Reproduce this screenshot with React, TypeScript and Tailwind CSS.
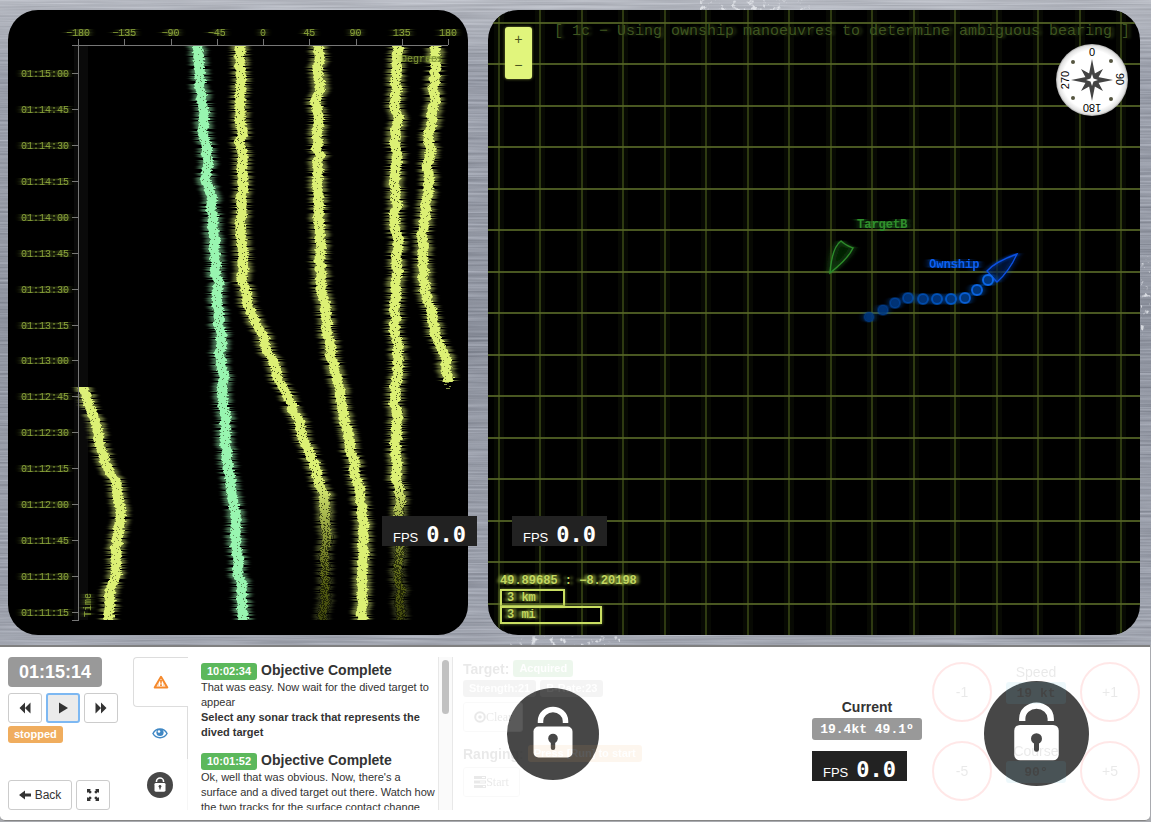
import React from 'react';

type Point = [number, number];

function makeRandom(seed: number) {
  let s = seed;
  return () => {
    s = (s + 0x6d2b79f5) | 0;
    let t = Math.imul(s ^ (s >>> 15), 1 | s);
    t = (t + Math.imul(t ^ (t >>> 7), 61 | t)) ^ t;
    return ((t ^ (t >>> 14)) >>> 0) / 4294967296;
  };
}

function interpolate(points: Point[], y: number) {
  for (let i = 1; i < points.length; i++) {
    const [x0, y0] = points[i - 1];
    const [x1, y1] = points[i];
    if (y <= y1) return x0 + ((x1 - x0) * (y - y0)) / (y1 - y0);
  }
  return points[points.length - 1][0];
}

interface Track {
  color: string;
  points: Point[];
  fadeFrom?: number;
}

const YELLOW = '#dcf074';

// Bearing tracks, in the plot's own coordinates.
const tracks: Track[] = [
  { color: '#98f5b0', points: [[189, 36], [191, 60], [196, 110], [200, 150], [204, 200], [209, 280], [215, 370], [218, 420], [223, 465], [227, 505], [230, 550], [233, 590], [235, 610]] },
  { color: YELLOW, fadeFrom: 484, points: [[232, 36], [233, 120], [234, 270], [239, 292], [254, 325], [277, 380], [297, 430], [314, 480], [318, 500], [317, 520], [317, 610]] },
  { color: YELLOW, points: [[311, 36], [310, 240], [314, 290], [327, 360], [338, 420], [350, 470], [354, 500], [354, 610]] },
  { color: YELLOW, fadeFrom: 470, points: [[389, 36], [388, 200], [388, 450], [391, 490], [391, 610]] },
  { color: YELLOW, points: [[428, 36], [427, 65], [423, 120], [420, 170], [414, 230], [415, 270], [424, 310], [435, 340], [439, 365], [440, 372]] },
  { color: YELLOW, points: [[76, 377], [84, 402], [91, 430], [99, 457], [109, 478], [114, 500], [109, 535], [106, 570], [101, 590], [100, 610]] },
];

function buildTrack(track: Track, seed: number) {
  const rnd = makeRandom(seed);
  const top = track.points[0][1];
  const bottom = track.points[track.points.length - 1][1];
  let core = '';
  let glow = '';
  let specks = '';
  let wobble = 0;
  for (let y = top; y < bottom; y++) {
    wobble = wobble * 0.88 + (rnd() - 0.5) * 1.9;
    const cx = interpolate(track.points, y) + wobble;
    const fading = track.fadeFrom ? Math.min(1, Math.max(0, (y - track.fadeFrom) / 70)) : 0;
    const half = 4.6 - fading * 1.2;
    const x0 = (cx - half - rnd()).toFixed(1);
    const w = (half * 2 + rnd() * 2).toFixed(1);
    core += `M${x0} ${y}h${w}v1h-${w}z`;
    if (rnd() > 0.2) glow += `M${(cx - half - 3 - rnd() * 2).toFixed(1)} ${y}h${(half * 2 + 8).toFixed(1)}v1h-${(half * 2 + 8).toFixed(1)}z`;
    const count = 1 + Math.round(fading * 6);
    for (let i = 0; i < count; i++) {
      if (rnd() > 0.4 - fading * 0.4) specks += `M${(cx + (rnd() - 0.5) * 12).toFixed(0)} ${y}h1v1h-1z`;
    }
  }
  return { core, glow, specks };
}

const trackShapes = tracks.map((t, i) => ({ ...t, ...buildTrack(t, i * 97 + 11) }));

const bearings = ['−180', '−135', '−90', '−45', '0', '45', '90', '135', '180'];
const times = [
  '01:15:00', '01:14:45', '01:14:30', '01:14:15', '01:14:00', '01:13:45', '01:13:30', '01:13:15',
  '01:13:00', '01:12:45', '01:12:30', '01:12:15', '01:12:00', '01:11:45', '01:11:30', '01:11:15',
];

function BrushedMetal() {
  return (
    <svg className="absolute inset-0 h-full w-full" aria-hidden="true">
      <defs>
        <filter id="brushed" x="0" y="0" width="100%" height="100%" colorInterpolationFilters="sRGB">
          <feTurbulence type="fractalNoise" baseFrequency="0.008 0.45" numOctaves="3" seed="4" />
          <feColorMatrix values="0.26 0.08 0 0 0.42  0.26 0.08 0 0 0.438  0.26 0.08 0 0 0.485  0 0 0 0 1" />
        </filter>
        <filter id="scratch" x="-20%" y="-20%" width="140%" height="140%">
          <feTurbulence type="fractalNoise" baseFrequency="0.16" numOctaves="3" seed="8" result="n" />
          <feColorMatrix in="n" values="0 0 0 0 0.9  0 0 0 0 0.92  0 0 0 0 0.95  6 0 0 0 -3.5" result="s" />
          <feComposite in="s" in2="SourceGraphic" operator="in" />
        </filter>
        <linearGradient id="shine" x1="0" y1="0" x2="0" y2="1">
          <stop offset="0" stopColor="#fff" stopOpacity="0.3" />
          <stop offset="0.12" stopColor="#fff" stopOpacity="0.02" />
          <stop offset="0.5" stopColor="#39404c" stopOpacity="0.1" />
          <stop offset="0.9" stopColor="#fff" stopOpacity="0.02" />
          <stop offset="1" stopColor="#fff" stopOpacity="0.12" />
        </linearGradient>
      </defs>
      <rect width="100%" height="100%" filter="url(#brushed)" />
      <rect width="100%" height="100%" fill="url(#shine)" />
      <g filter="url(#scratch)" fill="#fff" fillOpacity="0.7">
        <rect x="700" y="0" width="110" height="10" />
        <rect x="1141" y="255" width="9" height="80" />
        <rect x="510" y="636" width="110" height="9" />
      </g>
    </svg>
  );
}

function SonarPlot() {
  return (
    <svg viewBox="0 0 460 625" className="block h-auto w-full rounded-[30px] bg-black" role="img" aria-label="Sonar bearing plot">
      <defs>
        <filter id="smear" x="-30%" y="-2%" width="160%" height="104%">
          <feGaussianBlur stdDeviation="2 0.4" />
        </filter>
        <filter id="textSmear" x="-20%" y="-10%" width="140%" height="120%">
          <feGaussianBlur in="SourceGraphic" stdDeviation="3 0.3" result="b" />
          <feMerge>
            <feMergeNode in="b" />
            <feMergeNode in="SourceGraphic" />
          </feMerge>
        </filter>
        <linearGradient id="decay" gradientUnits="userSpaceOnUse" x1="0" y1="470" x2="0" y2="610">
          <stop offset="0" stopColor="#fff" />
          <stop offset="0.45" stopColor="#aaa" />
          <stop offset="1" stopColor="#666" />
        </linearGradient>
        <mask id="decayMask" maskUnits="userSpaceOnUse" x="0" y="0" width="460" height="625">
          <rect width="460" height="625" fill="url(#decay)" />
        </mask>
        <linearGradient id="decayFill" gradientUnits="userSpaceOnUse" x1="0" y1="480" x2="0" y2="580">
          <stop offset="0" stopColor="#dcf074" />
          <stop offset="1" stopColor="#9fb020" />
        </linearGradient>
      </defs>

      {trackShapes.map((t, i) => (
        <g key={i} mask={t.fadeFrom ? 'url(#decayMask)' : undefined}>
          <path d={t.glow} fill={t.color} opacity="0.5" filter="url(#smear)" />
          <path d={t.core} fill={t.fadeFrom ? 'url(#decayFill)' : t.color} />
          <path d={t.specks} fill="#1d2408" opacity={t.fadeFrom ? 0.7 : 0.5} />
        </g>
      ))}
      <path d="M437 372h4v1h-4zM436 374h3v1h-3zM441 376h2v1h-2zM438 378h4v1h-4z" fill={YELLOW} opacity="0.6" />

      <rect x="66" y="36" width="14" height="574" fill="#fff" opacity="0.04" />
      <g stroke="#777" strokeWidth="1">
        <path d="M64 35.5H440M70.5 36V610M64 610.5H71" />
        {bearings.map((b, i) => (
          <path key={b} d={`M${70.5 + Math.round(i * 46.25)} 29v6`} />
        ))}
        {times.map((t, i) => (
          <path key={t} d={`M64 ${63.5 + Math.round(i * 35.93)}h6`} />
        ))}
      </g>
      <g fill="#87a038" fontFamily="'Liberation Mono', monospace" fontSize="10" filter="url(#textSmear)">
        {bearings.map((b, i) => (
          <text key={b} x={70 + i * 46.25} y="26" textAnchor="middle">{b}</text>
        ))}
        {times.map((t, i) => (
          <text key={t} x="13" y={67 + Math.round(i * 35.93)}>{t}</text>
        ))}
        <text x="393" y="52" fill="#7d9434">Degrees</text>
        <text transform="translate(83 607) rotate(-90)">Time</text>
      </g>
    </svg>
  );
}

const trail: Point[] = [[381, 307], [395, 300], [407, 293], [420, 288], [435, 289], [449, 289], [463, 289], [477, 288], [489, 280], [500, 270]];
const gridSteps = Array.from({ length: 50 }, (_, i) => Math.floor(i * 41.53));

function MapGrid() {
  return (
    <svg viewBox="0 0 652 625" preserveAspectRatio="xMinYMin slice" className="absolute inset-0 h-full w-full" aria-hidden="true">
      <defs>
        <filter id="haze" x="-30%" y="-30%" width="160%" height="160%">
          <feGaussianBlur in="SourceGraphic" stdDeviation="3 0.6" result="b" />
          <feMerge>
            <feMergeNode in="b" />
            <feMergeNode in="SourceGraphic" />
          </feMerge>
        </filter>
      </defs>
      {gridSteps.map((s) => (
        <rect key={s} x={6 + s} y="0" width="10" height="2100" fill="#070903" />
      ))}
      {gridSteps.map((s) => (
        <rect key={s} x={10 + s} y="0" width="2" height="2100" fill="#2e3a11" />
      ))}
      {gridSteps.map((s) => (
        <rect key={s} x="0" y={12 + s} width="2100" height="2" fill="#566627" fillOpacity="0.85" />
      ))}
      <g filter="url(#haze)" fontFamily="'Liberation Mono', monospace" fontSize="12" fontWeight="700">
        <path d="M342 263C343 250 346 236 353 231C357 235 360 236 365 238C361 247 352 255 342 263z" fill="#0b2a0b" fillOpacity="0.5" stroke="#2d8c2a" strokeWidth="1.4" />
        <text x="369" y="218" fill="#2f8f2c">TargetB</text>
        <path d="M529 244C518 248 505 254 499 261L509 272C517 265 524 255 529 244z" fill="#001b4a" fillOpacity="0.4" stroke="#0a4fe0" strokeWidth="1.4" />
        <text x="441" y="258" fill="#0a5df0">Ownship</text>
        {trail.map(([x, y], i) => (
          <circle key={i} cx={x} cy={y} r="5" fill="#04377f" stroke="#0a6bf0" strokeOpacity={0.1 + i * 0.09} strokeWidth="2" fillOpacity={0.75} />
        ))}
      </g>
    </svg>
  );
}

function Compass() {
  return (
    <svg viewBox="0 0 74 74" className="absolute top-[33px] right-[11px] h-[74px] w-[74px]" role="img" aria-label="Compass">
      <defs>
        <radialGradient id="dial">
          <stop offset="0.82" stopColor="#fff" />
          <stop offset="0.95" stopColor="#e2e2e2" />
          <stop offset="1" stopColor="#a8a8a8" />
        </radialGradient>
      </defs>
      <circle cx="37" cy="37" r="36" fill="url(#dial)" />
      <g fill="#444">
        <path d="M26 26L37 32L48 26L42 37L48 48L37 42L26 48L32 37z" />
        <path d="M37 16L40.500 33.500L58 37L40.500 40.500L37 58L33.500 40.500L16 37L33.500 33.500z" />
      </g>
      <path d="M37 31L38.500 35.500L43 37L38.500 38.500L37 43L35.500 38.500L31 37L35.500 35.500z" fill="#fff" />
      <g fill="#555540">
        <circle cx="18" cy="19" r="2" />
        <circle cx="56" cy="18" r="2" />
        <circle cx="18" cy="55" r="2" />
        <circle cx="56" cy="56" r="2" />
      </g>
      <g fill="#000" fontFamily="'Liberation Sans', sans-serif" fontSize="11" textAnchor="middle">
        <text x="37" y="13">0</text>
        <text transform="translate(61 36) rotate(90)">90</text>
        <text transform="translate(37 61) rotate(180)">180</text>
        <text transform="translate(14 37) rotate(-90)">270</text>
      </g>
    </svg>
  );
}

function Fps({ className = '' }: { className?: string }) {
  return (
    <div className={`flex h-[30px] w-[95px] items-baseline gap-2 bg-[#222] pl-[11px] text-white ${className}`}>
      <span className="text-[13px] leading-[38px]">FPS</span>
      <span className="font-['DejaVu_Sans_Mono',monospace] text-[22px] leading-[38px] font-bold">0.0</span>
    </div>
  );
}

function LockGlyph({ className }: { className: string }) {
  return (
    <svg viewBox="0 0 92 92" className={className} aria-hidden="true">
      <circle cx="46" cy="46" r="46" fill="#474747" />
      <path d="M33.500 35V33a12.500 11.500 0 0 1 25 0v2" fill="none" stroke="#fff" strokeWidth="5.500" />
      <rect x="26.500" y="38.500" width="39" height="31" rx="5" fill="#fff" />
      <circle cx="46" cy="50.500" r="4.800" fill="#474747" />
      <rect x="43.800" y="52" width="4.400" height="10" rx="2" fill="#474747" />
    </svg>
  );
}

const button = 'flex h-[30px] items-center justify-center rounded-[3px] border border-[#ccc] bg-white';
const label = 'flex h-[17px] items-center rounded-[3px] px-1.5 text-[11px] leading-none font-bold text-white';

function Controls() {
  return (
    <section className="flex w-[133px] shrink-0 flex-col items-start pl-2" aria-label="Playback">
      <div className="flex h-[30px] items-center rounded-[4px] bg-[#999] px-[11px] text-[18px] leading-none font-bold text-white">01:15:14</div>
      <div className="mt-1.5 flex gap-1">
        <button type="button" aria-label="Slower" className={`${button} w-[34px]`}>
          <svg viewBox="0 0 12 12" className="h-3 w-3" fill="#333"><path d="M6 0.500V11.500L0.500 6zM11.500 0.500V11.500L6 6z" /></svg>
        </button>
        <button type="button" aria-label="Play" className="flex h-[30px] w-[34px] items-center justify-center rounded-[3px] border-2 border-[#7db8f2] bg-[#ebebeb]">
          <svg viewBox="0 0 12 12" className="h-3 w-3" fill="#333"><path d="M2 0.500V11.500L11 6z" /></svg>
        </button>
        <button type="button" aria-label="Faster" className={`${button} w-[34px]`}>
          <svg viewBox="0 0 12 12" className="h-3 w-3" fill="#333"><path d="M0.500 0.500V11.500L6 6zM6 0.500V11.500L11.500 6z" /></svg>
        </button>
      </div>
      <div className={`${label} mt-[3px] bg-[#f0ad5e]`}>stopped</div>
      <div className="mt-auto flex gap-1">
        <button type="button" className={`${button} w-16 gap-1 text-[12px]`}>
          <svg viewBox="0 0 12 12" className="h-3 w-3" fill="#333"><path d="M0 6L6 1.500V4.500H12V7.500H6V10.500z" /></svg>
          Back
        </button>
        <button type="button" aria-label="Full screen" className={`${button} w-[34px]`}>
          <svg viewBox="0 0 12 12" className="h-3 w-3" fill="#333">
            <path d="M0 0H4L2.900 1.100L4.800 3L3 4.800L1.100 2.900L0 4z" />
            <path d="M12 0H8L9.100 1.100L7.200 3L9 4.800L10.900 2.900L12 4z" />
            <path d="M0 12H4L2.900 10.900L4.800 9L3 7.200L1.100 9.100L0 8z" />
            <path d="M12 12H8L9.100 10.900L7.200 9L9 7.200L10.900 9.100L12 8z" />
          </svg>
        </button>
      </div>
    </section>
  );
}

function Tabs() {
  return (
    <nav className="flex w-[55px] shrink-0 flex-col" aria-label="Panels">
      <button type="button" aria-label="Objectives" className="flex h-[50px] items-center justify-center rounded-l-[4px] border border-r-0 border-[#ddd]">
        <svg viewBox="0 0 16 14" className="h-3.5 w-4">
          <path d="M8 1.800L14.300 12.500H1.700z" fill="#fff" stroke="#f5892c" strokeWidth="2" strokeLinejoin="round" />
          <path d="M7 5h2l-0.400 3.700h-1.200zM7.100 9.300h1.800v1.600H7.100z" fill="#f5892c" />
          <path d="M4 11l2-4v4zM12 11l-2-4v4z" fill="#f5892c" opacity="0.3" />
        </svg>
      </button>
      <button type="button" aria-label="View" className="flex h-[52px] items-center justify-center border-r border-[#ddd]">
        <svg viewBox="0 0 16 12" className="h-3 w-4">
          <path d="M1 6.500C4 0.500 12 0.500 15 6.500C12 12 4 12 1 6.500z" fill="#fff" stroke="#3f87c4" strokeWidth="1.500" />
          <circle cx="8" cy="5.500" r="3.600" fill="#3f87c4" />
          <circle cx="7" cy="4.500" r="1.300" fill="#fff" />
        </svg>
      </button>
      <button type="button" aria-label="Locked" className="flex h-[51px] items-center justify-center border-r border-[#f6f6f6]">
        <LockGlyph className="h-[26px] w-[26px]" />
      </button>
    </nav>
  );
}

function Message({ time, children }: { time: string; children: React.ReactNode }) {
  return (
    <article className="mb-2.5 text-[11px] leading-[15px]">
      <header className="flex h-5 items-end gap-1">
        <span className={`${label} bg-[#5cb85c]`}>{time}</span>
        <h2 className="text-[14px] leading-5 font-bold">Objective Complete</h2>
      </header>
      {children}
    </article>
  );
}

function Messages() {
  return (
    <section className="flex h-[153px] w-[265px] shrink-0 overflow-hidden pl-[13px]" aria-label="Messages">
      <div className="min-w-0 flex-1 pt-[3px]">
        <Message time="10:02:34">
          <p>That was easy. Now wait for the dived target to appear</p>
          <p className="font-bold">Select any sonar track that represents the dived target</p>
        </Message>
        <Message time="10:01:52">
          <p>Ok, well that was obvious. Now, there's a surface and a dived target out there. Watch how the two tracks for the surface contact change</p>
        </Message>
      </div>
      <div className="w-[15px] border-x border-[#e8e8e8] bg-[#fafafa] px-[3px] pt-[3px]">
        <div className="h-[54px] rounded-full bg-[#c1c1c1]" />
      </div>
    </section>
  );
}

function TargetPanel() {
  return (
    <section className="relative ml-2.5 w-[180px] shrink-0" aria-label="Target">
      <div className="absolute inset-0 flex items-center justify-center">
        <LockGlyph className="h-[92px] w-[92px]" />
      </div>
      <div className="relative pt-[3px] opacity-10">
        <div className="flex h-[17px] items-center gap-1">
          <h2 className="text-[14px] leading-none font-bold">Target:</h2>
          <span className={`${label} bg-[#5cb85c]`}>Acquired</span>
        </div>
        <div className="mt-[3px] flex gap-1">
          <span className={`${label} bg-[#999]`}>Strength:21</span>
          <span className={`${label} bg-[#999]`}>B-Rate:23</span>
        </div>
        <button type="button" disabled className={`${button} mt-[5px] w-[60px] bg-transparent font-['Liberation_Serif',serif] text-[12px]`}>
          <svg viewBox="0 0 12 12" className="h-3 w-3">
            <circle cx="6" cy="6" r="4.800" fill="none" stroke="#333" strokeWidth="2" />
            <circle cx="6" cy="6" r="1.800" fill="#333" />
          </svg>
          Clear
        </button>
        <div className="mt-[13px] flex h-[17px] items-center gap-1">
          <h2 className="text-[14px] leading-none font-bold">Ranging:</h2>
          <span className={`${label} whitespace-nowrap bg-[#f0ad5e]`}>Press [Run] to start</span>
        </div>
        <button type="button" disabled className={`${button} mt-[5px] w-[57px] bg-transparent font-['Liberation_Serif',serif] text-[12px]`}>
          <svg viewBox="0 0 12 12" className="h-3 w-3" fill="#333">
            <path d="M0 0h12v3H0zM0 4.500h12v3H0zM0 9h12v3H0z" />
            <path d="M8 1h3v1H8zM6 5.500h5v1H6zM9 10h2v1H9z" fill="#fff" />
          </svg>
          Start
        </button>
      </div>
    </section>
  );
}

function StepButton({ children }: { children: React.ReactNode }) {
  return (
    <button type="button" disabled className="h-[60px] w-[60px] rounded-full border-2 border-[#ff2020] text-[14px]">{children}</button>
  );
}

function SteerRow({ name, value, down, up }: { name: string; value: string; down: string; up: string }) {
  return (
    <div className="flex h-[60px] justify-between">
      <StepButton>{down}</StepButton>
      <div className="flex w-[60px] flex-col items-center">
        <span className="text-[14px] leading-5">{name}</span>
        <span className="flex h-[22px] w-full items-center justify-center rounded-[3px] bg-[#5bc0de] font-['Liberation_Mono',monospace] text-[13px] leading-none font-bold">{value}</span>
      </div>
      <StepButton>{up}</StepButton>
    </div>
  );
}

function Steering() {
  return (
    <section className="ml-auto flex shrink-0 gap-2.5 pr-2.5" aria-label="Steering">
      <div className="flex flex-col items-start pt-10">
        <div className="flex flex-col items-center">
          <h2 className="text-[14px] leading-5 font-bold">Current</h2>
          <span className="mt-px flex h-[22px] w-[110px] items-center justify-center rounded-[3px] bg-[#999] font-['Liberation_Mono',monospace] text-[13px] leading-none font-bold text-white">19.4kt 49.1º</span>
        </div>
        <Fps className="mt-[11px]" />
      </div>
      <div className="relative w-[208px]">
        <div className="absolute inset-0 flex items-center justify-center">
          <LockGlyph className="h-[105px] w-[105px] shrink-0" />
        </div>
        <div className="relative flex flex-col gap-[19px] pt-[5px] opacity-10">
          <SteerRow name="Speed" value="19 kt" down="-1" up="+1" />
          <SteerRow name="Course" value="90°" down="-5" up="+5" />
        </div>
      </div>
    </section>
  );
}

const hazeText = '[text-shadow:3px_0_3px_#8fa83c,-3px_0_3px_#8fa83c]';

export default function App() {
  return (
    <div className="min-h-screen bg-[#a9abb0] font-['Liberation_Sans',Arial,sans-serif] text-[#333]">
      <main className="relative grid grid-cols-[460fr_652fr] gap-5 pt-2.5 pr-[11px] pb-2.5 pl-2">
        <BrushedMetal />
        <div className="relative">
          <SonarPlot />
          <Fps className="absolute -right-[9px] bottom-[89px]" />
        </div>
        <div className="relative overflow-hidden rounded-[30px] bg-black font-['Liberation_Mono',monospace]">
          <MapGrid />
          <h1 className="absolute top-3 right-2.5 text-[15px] leading-5 whitespace-nowrap text-[#3f5520] [text-shadow:3px_0_3px_#2a3a14]">
            [ 1c − Using ownship manoeuvres to determine ambiguous bearing ]
          </h1>
          <div className="absolute top-[17px] left-[17px] flex h-[52px] w-[27px] flex-col rounded-[3px] bg-[#e1f57c] text-[14px] leading-none text-[#4c5620] shadow-[0_0_3px_#8b9a3c]">
            <button type="button" aria-label="Zoom in" className="flex-1">+</button>
            <button type="button" aria-label="Zoom out" className="flex-1">−</button>
          </div>
          <Compass />
          <Fps className="absolute bottom-[89px] left-6 font-['Liberation_Sans',Arial,sans-serif]" />
          <div className={`absolute bottom-[11px] left-3 text-[12px] font-bold text-[#c2d660] ${hazeText}`}>
            <p className="h-[17px] leading-[18px]">49.89685 : −8.20198</p>
            <div className="h-[18px] w-[65px] border-2 border-[#c9de62] pl-[5px] leading-[14px] shadow-[0_0_3px_#6f8030]">3 km</div>
            <div className="-mt-px h-[18px] w-[102px] border-2 border-[#c9de62] pl-[5px] leading-[14px] shadow-[0_0_3px_#6f8030]">3 mi</div>
          </div>
        </div>
      </main>
      <footer className="relative mr-px flex rounded-b-[5px] border-t-2 border-b border-t-[#808080] border-b-[#858585] bg-white py-2.5">
        <Controls />
        <Tabs />
        <Messages />
        <TargetPanel />
        <Steering />
      </footer>
    </div>
  );
}
